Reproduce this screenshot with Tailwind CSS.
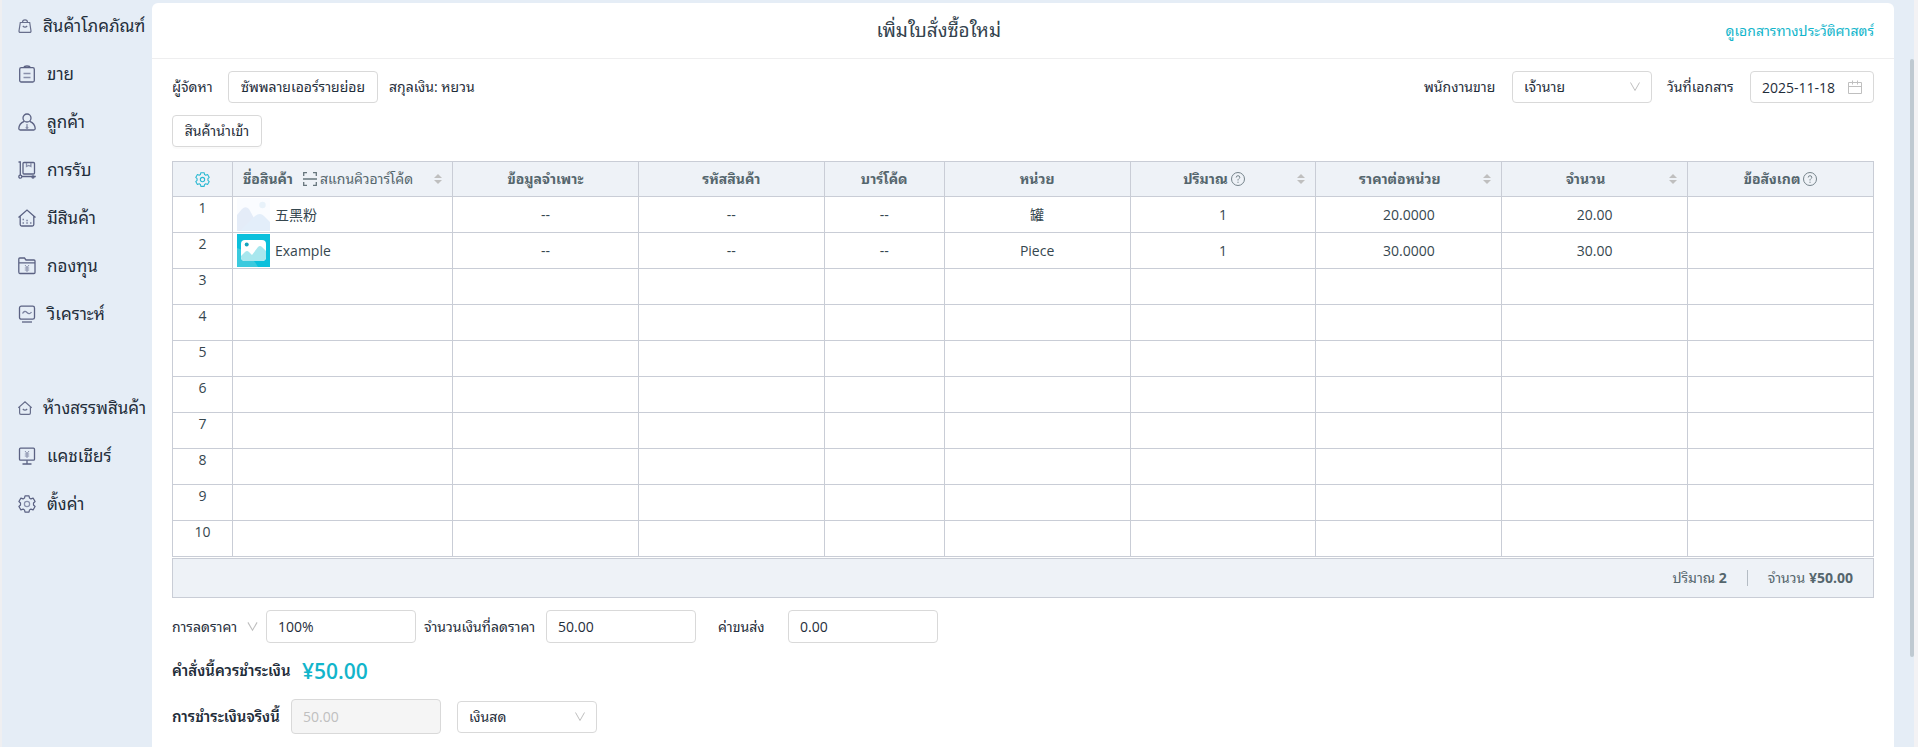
<!DOCTYPE html>
<html lang="th">
<head>
  <meta charset="UTF-8">
  <meta name="viewport" content="width=device-width, initial-scale=1">
  <title>เพิ่มใบสั่งซื้อใหม่</title>
  <script src="https://cdn.jsdelivr.net/npm/@tailwindcss/browser@4"></script>
</head>
<body class="h-screen overflow-hidden flex bg-[#e5edf6] border-l-2 border-[#efeff1] text-sm text-[#1f2d3a] font-['Open_Sans','Noto_Sans_Thai_Looped','Loma','Noto_Sans','Noto_Sans_CJK_SC',sans-serif]">

  <!-- Sidebar -->
  <nav class="w-[150px] shrink-0 pt-0.5 pl-4 text-[17px] whitespace-nowrap">
    <a href="#" class="flex items-center h-12 gap-[11px]">
      <svg class="size-[14px] shrink-0" viewBox="0 0 14 14" fill="none" stroke="#686f8c" stroke-width="1.2"><path d="M2.300 3.500h9.400l1.300 8.500q.1 1.300-1.200 1.300H2.200q-1.300 0-1.200-1.300zM4.500 3.300q0-2.500 2.500-2.500t2.500 2.500M4.800 7q2.200 2.200 4.400 0"/></svg>
      สินค้าโภคภัณฑ์
    </a>
    <a href="#" class="flex items-center h-12 gap-[11px]">
      <svg class="size-[18px] shrink-0" viewBox="0 0 18 18" fill="none" stroke="#5b6283" stroke-width="1.3"><rect x="1.700" y="2.700" width="14.600" height="14.300" rx="1.500"/><path d="M6 2.700q0-1.700 3-1.700t3 1.700"/><path d="M5.500 8.500h7M5.500 12.500h7" stroke="#8990ab"/></svg>
      ขาย
    </a>
    <a href="#" class="flex items-center h-12 gap-[11px]">
      <svg class="size-[18px] shrink-0" viewBox="0 0 18 18" fill="none" stroke="#5b6283" stroke-width="1.300"><circle cx="9" cy="5" r="4"/><path d="M6.200 8.300Q1 10.500.8 15.500q0 1.500 1.500 1.500h13.400q1.500 0 1.500-1.500-.2-5-5.400-7.200"/><path d="M9 11v2.500l-.8 1.200.8.9.8-.9-.8-1.200" stroke="#8990ab"/></svg>
      ลูกค้า
    </a>
    <a href="#" class="flex items-center h-12 gap-[11px]">
      <svg class="size-[18px] shrink-0" viewBox="0 0 18 18" fill="none" stroke="#5b6283" stroke-width="1.300"><path d="M.5 1h1.800v13M4 15.500h13.800"/><circle cx="2.300" cy="15.700" r="1.500"/><circle cx="15" cy="16" r="1"/><rect x="5" y="1.500" width="11.500" height="11.500" rx="1"/><path d="M8.500 2v3.500l2.200-1 2.200 1V2" stroke="#8990ab"/></svg>
      การรับ
    </a>
    <a href="#" class="flex items-center h-12 gap-[11px]">
      <svg class="size-[18px] shrink-0" viewBox="0 0 18 18" fill="none" stroke="#5b6283" stroke-width="1.300"><path d="M.5 8.500L9 1l8.500 7.500M2.200 7.500v8q0 1.500 1.500 1.500h10.600q1.500 0 1.500-1.500v-8"/><path d="M4.500 10.500H6M4.500 14H6M8.300 14h1.500M12 14h1.500M8.300 11.500h1.500" stroke="#7a819e" stroke-width="1.500"/></svg>
      มีสินค้า
    </a>
    <a href="#" class="flex items-center h-12 gap-[11px]">
      <svg class="size-[18px] shrink-0" viewBox="0 0 18 18" fill="none" stroke="#5b6283" stroke-width="1.300"><path d="M.8 15V2q0-1 1-1h4.700l1.500 2h8q1 0 1 1v11.500q0 1-1 1H1.800q-1 0-1-1.500zM.8 5.800h16.400"/><path d="M7 8l2 2.500L11 8M9 10.500V15M6.800 11h4.400M6.800 13h4.400" stroke="#8990ab" stroke-width="1"/></svg>
      กองทุน
    </a>
    <a href="#" class="flex items-center h-12 gap-[11px]">
      <svg class="size-[18px] shrink-0" viewBox="0 0 18 18" fill="none" stroke="#5b6283" stroke-width="1.300"><rect x="1.500" y="1.200" width="15" height="13" rx="1.800"/><path d="M4 17h10"/><path d="M4.500 8.500q2-3.500 4.500-1t4.500-.5" stroke="#7a819e"/></svg>
      วิเคราะห์
    </a>
    <a href="#" class="flex items-center h-12 gap-[11px] mt-[46px]">
      <svg class="size-[14px] shrink-0" viewBox="0 0 14 14" fill="none" stroke="#686f8c" stroke-width="1.200"><path d="M.3 6.800L7 .8l6.700 6M1.600 5.800V12q0 1.300 1.300 1.300h8.200q1.300 0 1.300-1.300V5.800M4.800 8q2.200 2.200 4.400 0"/></svg>
      ห้างสรรพสินค้า
    </a>
    <a href="#" class="flex items-center h-12 gap-[11px]">
      <svg class="size-[18px] shrink-0" viewBox="0 0 18 18" fill="none" stroke="#5b6283" stroke-width="1.300"><rect x="1.500" y="1.200" width="15" height="12" rx="1"/><path d="M9 13.200V17M4.500 17h9"/><path d="M7 4l2 2.500L11 4M9 6.500V11M6.800 7h4.400M6.800 9h4.400" stroke="#8990ab" stroke-width="1"/></svg>
      แคชเชียร์
    </a>
    <a href="#" class="flex items-center h-12 gap-[11px]">
      <svg class="size-[18px] shrink-0" viewBox="0 0 18 18" fill="none" stroke="#5b6283" stroke-width="1.200" stroke-linejoin="round"><path d="M7 .8h4l.5 2.300 1.400.8 2.200-.8 2 3.400L15.500 8v2l1.600 1.500-2 3.400-2.200-.8-1.400.8-.5 2.300H7l-.5-2.300-1.400-.8-2.200.8-2-3.400L2.500 10V8L.9 6.500l2-3.400 2.200.8 1.400-.8z"/><circle cx="9" cy="9" r="2.600" stroke="#8990ab"/></svg>
      ตั้งค่า
    </a>
  </nav>

  <!-- Main card -->
  <main class="flex-1 min-w-0 mt-[3px] bg-white rounded-t-md">
    <header class="flex items-center gap-5 h-14 px-5 border-b border-[#eeeeef]">
      <h1 class="flex-1 text-center text-[19px] text-[#33434e]">เพิ่มใบสั่งซื้อใหม่</h1>
      <a href="#" class="text-[#12b5cb]">ดูเอกสารทางประวัติศาสตร์</a>
    </header>

    <div class="px-5 pt-3">
      <div class="flex items-center h-8 whitespace-nowrap">
        <span class="w-14">ผู้จัดหา</span>
        <button type="button" class="w-[150px] h-8 border border-[#d9d9d9] rounded">ซัพพลายเออร์รายย่อย</button>
        <span class="ml-[11px]">สกุลเงิน: หยวน</span>
        <label for="seller" class="ml-auto w-[72px]">พนักงานขาย</label>
        <div class="relative ml-4">
          <select id="seller" class="appearance-none w-[140px] h-8 pl-[11px] border border-[#d9d9d9] rounded">
            <option>เจ้านาย</option>
          </select>
          <svg class="absolute right-[11px] top-[10px] size-3 pointer-events-none" viewBox="0 0 12 12" fill="none" stroke="#bfbfbf"><path d="M1.500 1.500L6 9.500l4.500-8"/></svg>
        </div>
        <label for="date" class="ml-[15px] w-[68px]">วันที่เอกสาร</label>
        <div class="relative ml-[15px]">
          <input id="date" type="text" value="2025-11-18" class="w-[124px] h-8 pl-[11px] border border-[#d9d9d9] rounded">
          <svg class="absolute right-3 top-[9px] size-[14px] pointer-events-none" viewBox="0 0 14 14" fill="none" stroke="#bfbfbf"><path d="M.5 2.500h13v11H.5zM.5 6.500h13M4.500.5v4M9.500.5v4"/></svg>
        </div>
      </div>

      <button type="button" class="mt-3 w-[90px] h-8 border border-[#d9d9d9] rounded shadow-[0_2px_0_rgba(0,0,0,0.02)] whitespace-nowrap">สินค้านำเข้า</button>

      <table class="mt-[14px] w-full table-fixed border-collapse text-center text-[#36474f]">
        <colgroup>
          <col class="w-[60px]"><col class="w-[220px]"><col><col><col class="w-[120px]"><col><col><col><col><col>
        </colgroup>
        <thead class="bg-[#eef2f7] text-sm text-[#55666d]">
          <tr class="h-[35px] *:border *:border-[#c9cdd6]">
            <th>
              <svg class="mx-auto size-[15px]" viewBox="0 0 18 18" fill="none" stroke="#2bb9d2" stroke-width="1.300" stroke-linejoin="round"><path d="M7 .8h4l.5 2.300 1.400.8 2.200-.8 2 3.400L15.500 8v2l1.600 1.500-2 3.400-2.200-.8-1.400.8-.5 2.300H7l-.5-2.300-1.400-.8-2.200.8-2-3.400L2.500 10V8L.9 6.500l2-3.400 2.200.8 1.400-.8z"/><circle cx="9" cy="9" r="2.600"/></svg>
            </th>
            <th class="pl-2.5 pr-2.5">
              <div class="flex items-center whitespace-nowrap">
                ชื่อสินค้า
                <svg class="ml-2.5 size-[14px] shrink-0" viewBox="0 0 14 14" fill="none" stroke="#66757c" stroke-width="1.300"><path d="M.7 4V.7H4M10 .7h3.300V4M.7 10v3.300H4M10 13.300h3.300V10M0 7h14"/></svg>
                <span class="ml-[3px] font-normal">สแกนคิวอาร์โค้ด</span>
                <svg class="ml-auto w-2 h-3 shrink-0" viewBox="0 0 8 12" fill="#bfbfbf"><path d="M4 1l4 4H0zM4 11L0 7h8z"/></svg>
              </div>
            </th>
            <th>ข้อมูลจำเพาะ</th>
            <th>รหัสสินค้า</th>
            <th>บาร์โค้ด</th>
            <th>หน่วย</th>
            <th class="pr-2.5">
              <div class="flex items-center">
                <span class="flex flex-1 items-center justify-center gap-[3px]">ปริมาณ
                  <svg class="size-[14px]" viewBox="0 0 14 14" fill="none" stroke="#75838a"><circle cx="7" cy="7" r="6.500"/><path d="M5.200 5.500Q5.300 3.700 7 3.700t1.800 1.600q0 .9-1 1.500T7 8.500M7 9.700v1.200"/></svg>
                </span>
                <svg class="w-2 h-3" viewBox="0 0 8 12" fill="#bfbfbf"><path d="M4 1l4 4H0zM4 11L0 7h8z"/></svg>
              </div>
            </th>
            <th class="pr-2.5">
              <div class="flex items-center">
                <span class="flex-1">ราคาต่อหน่วย</span>
                <svg class="w-2 h-3" viewBox="0 0 8 12" fill="#bfbfbf"><path d="M4 1l4 4H0zM4 11L0 7h8z"/></svg>
              </div>
            </th>
            <th class="pr-2.5">
              <div class="flex items-center">
                <span class="flex-1">จำนวน</span>
                <svg class="w-2 h-3" viewBox="0 0 8 12" fill="#bfbfbf"><path d="M4 1l4 4H0zM4 11L0 7h8z"/></svg>
              </div>
            </th>
            <th>
              <span class="flex items-center justify-center gap-[3px]">ข้อสังเกต
                <svg class="size-[14px]" viewBox="0 0 14 14" fill="none" stroke="#75838a"><circle cx="7" cy="7" r="6.500"/><path d="M5.200 5.500Q5.300 3.700 7 3.700t1.800 1.600q0 .9-1 1.500T7 8.500M7 9.700v1.200"/></svg>
              </span>
            </th>
          </tr>
        </thead>
        <tbody id="rows">
          <tr class="h-9 *:border *:border-[#c9cdd6]">
            <td class="align-top pt-px">1</td>
            <td class="pl-1">
              <div class="flex items-center gap-[5px]">
                <svg class="size-[33px]" viewBox="0 0 33 33"><path d="M0 0h33v33H0z" fill="#fafcff"/><circle cx="25.500" cy="7" r="3.200" fill="#e8f2fa"/><path d="M0 17l5-6q3.500-3.500 7 0l12 22H0z" fill="#e4ecf8"/><path d="M3 33l15-15q5-4 9 0l6 6v9z" fill="#e3eefa"/></svg>
                五黑粉
              </div>
            </td>
            <td>--</td><td>--</td><td>--</td><td>罐</td><td>1</td><td>20.0000</td><td>20.00</td><td></td>
          </tr>
          <tr class="h-9 *:border *:border-[#c9cdd6]">
            <td class="align-top pt-px">2</td>
            <td class="pl-1">
              <div class="flex items-center gap-[5px]">
                <svg class="size-[33px]" viewBox="0 0 33 33"><path d="M0 0h33v33H0z" fill="#0bc0dc"/><path d="M0 14q12 3 21 19H0z" fill="#3bcade"/><rect x="4" y="6" width="25" height="21" rx="4" fill="#fff"/><path d="M4 22l4-4q2-2 4 0l3 3 6-8q2-2 4 0l4 4v6q0 4-4 4H8q-4 0-4-4z" fill="#a8e7ee"/><circle cx="9.700" cy="10.500" r="2" fill="#16a5bd"/></svg>
                Example
              </div>
            </td>
            <td>--</td><td>--</td><td>--</td><td>Piece</td><td>1</td><td>30.0000</td><td>30.00</td><td></td>
          </tr>
        </tbody>
      </table>
      <div class="mt-px flex items-center justify-end h-10 pr-5 border border-[#c9cdd6] bg-[#eef2f7] text-[#55666d]">
        <span>ปริมาณ <b>2</b></span>
        <span class="mx-5 w-px h-4 bg-[#b4bcc4]"></span>
        <span>จำนวน <b>¥50.00</b></span>
      </div>

      <div class="mt-3 flex items-center h-[33px] whitespace-nowrap">
        <label for="discount" class="w-[67px]">การลดราคา</label>
        <svg class="mx-2 size-[11px]" viewBox="0 0 12 12" fill="none" stroke="#bfbfbf" stroke-width="1.200"><path d="M1 1.500L6 10l5-8.500"/></svg>
        <input id="discount" type="text" value="100%" class="w-[150px] h-[33px] px-[11px] border border-[#d9d9d9] rounded">
        <label for="discounted" class="ml-2 w-[114px]">จำนวนเงินที่ลดราคา</label>
        <input id="discounted" type="text" value="50.00" class="ml-2 w-[150px] h-[33px] px-[11px] border border-[#d9d9d9] rounded">
        <label for="shipping" class="ml-[22px] w-12">ค่าขนส่ง</label>
        <input id="shipping" type="text" value="0.00" class="ml-[22px] w-[150px] h-[33px] px-[11px] border border-[#d9d9d9] rounded">
      </div>

      <div class="mt-3 flex items-center h-8 whitespace-nowrap">
        <span class="w-[122px] text-[15px] font-semibold">คำสั่งนี้ควรชำระเงิน</span>
        <span class="ml-2 text-[21px] font-semibold text-[#12b5cb]">¥50.00</span>
      </div>

      <div class="mt-3 flex items-center h-[35px] whitespace-nowrap">
        <label for="paid" class="w-[111px] text-[15px] font-semibold">การชำระเงินจริงนี้</label>
        <input id="paid" type="text" value="50.00" disabled class="ml-2 w-[150px] h-[35px] px-[11px] border border-[#d9d9d9] rounded bg-[#f5f5f5] text-[#bfbfbf]">
        <div class="relative ml-4">
          <select aria-label="วิธีชำระเงิน" class="appearance-none w-[140px] h-8 pl-[11px] border border-[#d9d9d9] rounded">
            <option>เงินสด</option>
          </select>
          <svg class="absolute right-[11px] top-2.5 size-3 pointer-events-none" viewBox="0 0 12 12" fill="none" stroke="#bfbfbf"><path d="M1.500 1.500L6 9.500l4.500-8"/></svg>
        </div>
      </div>
    </div>
  </main>

  <!-- Scrollbar -->
  <div class="w-6 shrink-0 pl-4 pt-[59px] border-r-4 border-[#f3f2f4]">
    <div class="w-1 h-[598px] rounded-sm bg-[#bfc9d1]"></div>
  </div>

  <script>
    // Empty lines up to ten
    const rows = document.getElementById('rows');
    for (let i = 3; i <= 10; i++) {
      const tr = document.createElement('tr');
      tr.className = 'h-9 *:border *:border-[#c9cdd6]';
      tr.innerHTML = `<td class="align-top pt-px">${i}</td>` + '<td></td>'.repeat(9);
      rows.appendChild(tr);
    }
  </script>
</body>
</html>
